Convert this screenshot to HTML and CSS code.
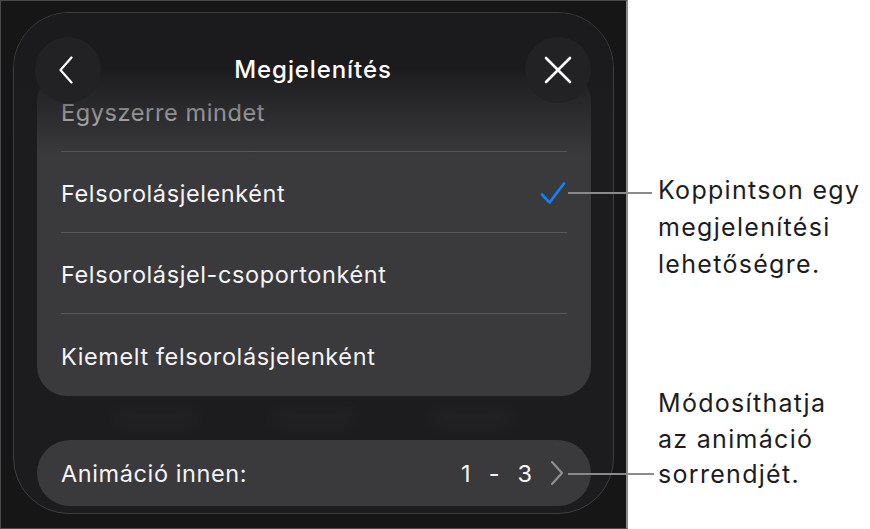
FILE: index.html
```html
<!DOCTYPE html>
<html lang="hu">
<head>
<meta charset="utf-8">
<title>Megjelenítés</title>
<link rel="stylesheet" href="styles.css">
</head>
<body>
<div class="page">
  <div class="device">
    <div class="sheet">
      <div class="list-card">
        <div class="row"><span class="label">Egyszerre mindet</span></div>
        <div class="row"><span class="label">Felsorolásjelenként</span>
          <svg class="check" width="26" height="24" viewBox="0 0 26 24"><path d="M2 13.5 L9.5 21.5 L24 2.5" fill="none" stroke="#0a84ff" stroke-width="2.6" stroke-linecap="round" stroke-linejoin="round"/></svg>
        </div>
        <div class="row"><span class="label">Felsorolásjel-csoportonként</span></div>
        <div class="row"><span class="label">Kiemelt felsorolásjelenként</span></div>
      </div>
      <div class="ghosts">
        <span class="ghost"></span><span class="ghost"></span><span class="ghost"></span>
      </div>
      <div class="order-btn">
        <span class="label">Animáció innen:</span>
        <span class="range"><span>1</span><span>-</span><span>3</span></span>
        <svg class="chev" width="14" height="26" viewBox="0 0 14 26"><path d="M2 2 L12 13 L2 24" fill="none" stroke="#8e8e93" stroke-width="2.2" stroke-linecap="round" stroke-linejoin="round"/></svg>
      </div>
      <div class="header">
        <button class="round-btn" aria-label="Vissza">
          <svg width="16" height="28" viewBox="0 0 16 28"><path d="M13.5 1.5 L2.5 14 L13.5 26.5" fill="none" stroke="#fff" stroke-width="2.2" stroke-linecap="round" stroke-linejoin="round"/></svg>
        </button>
        <div class="title">Megjelenítés</div>
        <button class="round-btn" aria-label="Bezárás">
          <svg width="28" height="28" viewBox="0 0 28 28"><path d="M2 2 L26 26 M26 2 L2 26" fill="none" stroke="#fff" stroke-width="2.6" stroke-linecap="round"/></svg>
        </button>
      </div>
    </div>
  </div>
  <div class="notes">
    <p class="note note-1">Koppintson egy<br>megjelenítési<br>lehetőségre.</p>
    <p class="note note-2">Módosíthatja<br>az animáció<br>sorrendjét.</p>
  </div>
  <span class="leader leader-1"></span>
  <span class="leader leader-2"></span>
</div>
</body>
</html>
```

FILE: styles.css
```css
* { box-sizing: border-box; }
html, body { margin: 0; padding: 0; background: #fff; }
body { font-family: Inter, "Noto Sans", "Liberation Sans", sans-serif; }

.page {
  position: relative;
  width: 870px;
  height: 529px;
  display: flex;
  overflow: hidden;
}

.device {
  width: 628px;
  height: 529px;
  flex: none;
  background: #161617;
  border: 1px solid #4a4a4c;
  border-right: 2px solid #8c8c8e;
  padding: 11px 12px 14px 12px;
}

.sheet {
  position: relative;
  height: 502px;
  background: #1c1c1e;
  border: 1px solid #3e3e40;
  border-radius: 56px;
  padding: 58px 22px 0 23px;
  display: flex;
  flex-direction: column;
  overflow: hidden;
}

.list-card {
  background: #3a3a3c;
  border-radius: 30px;
  padding: 0 24px;
  display: flex;
  flex-direction: column;
}
.row {
  height: 81px;
  display: flex;
  align-items: center;
  justify-content: space-between;
  border-bottom: 1.5px solid #58585b;
  padding-top: 3px;
}
.row:last-child { border-bottom: none; height: 82px; }
.label {
  color: #f4f4f5;
  font-size: 23.5px;
  letter-spacing: 0.6px;
}
.check { margin-right: 1px; margin-top: -1px; }

.ghosts {
  height: 44px;
  display: flex;
  justify-content: space-around;
  align-items: center;
  padding: 0 40px;
}
.ghost {
  width: 90px;
  height: 24px;
  border-radius: 12px;
  background: rgba(255,255,255,0.025);
  filter: blur(10px);
}

.order-btn {
  height: 66px;
  background: #3a3a3c;
  border-radius: 33px;
  display: flex;
  align-items: center;
  padding: 0 27px 0 24px;
}
.order-btn .label { flex: 1; }
.range {
  display: flex;
  gap: 18px;
  color: #f4f4f5;
  font-size: 23.5px;
  margin-right: 18px;
}

.header {
  position: absolute;
  left: 0; right: 0; top: 0;
  height: 150px;
  padding: 24px 22px 0 21px;
  display: flex;
  align-items: flex-start;
  justify-content: space-between;
  background: linear-gradient(to bottom,
    rgba(27,27,29,1) 0px,
    rgba(27,27,29,0.98) 56px,
    rgba(27,27,29,0.72) 76px,
    rgba(27,27,29,0.35) 112px,
    rgba(27,27,29,0) 142px);
}
.round-btn {
  width: 66px;
  height: 66px;
  border-radius: 50%;
  border: none;
  background: #222224;
  display: flex;
  align-items: center;
  justify-content: center;
  padding: 0;
}
.round-btn:first-child svg { margin-right: 4px; }
.title {
  color: #fff;
  font-size: 24px;
  font-weight: 500;
  letter-spacing: 0.9px;
  line-height: 66px;
}

.notes {
  flex: 1;
  padding-left: 30px;
  display: flex;
  flex-direction: column;
}
.note {
  margin: 0;
  color: #1d1d1f;
  font-size: 25px;
  letter-spacing: 1.3px;
  line-height: 37px;
}
.note-1 { margin-top: 172px; }
.note-2 { margin-top: 103px; line-height: 35.5px; }

.leader {
  position: absolute;
  height: 2px;
  background: #8a8a8c;
}
.leader-1 { left: 568px; width: 84px; top: 192px; }
.leader-2 { left: 568px; width: 86px; top: 473px; }
```
